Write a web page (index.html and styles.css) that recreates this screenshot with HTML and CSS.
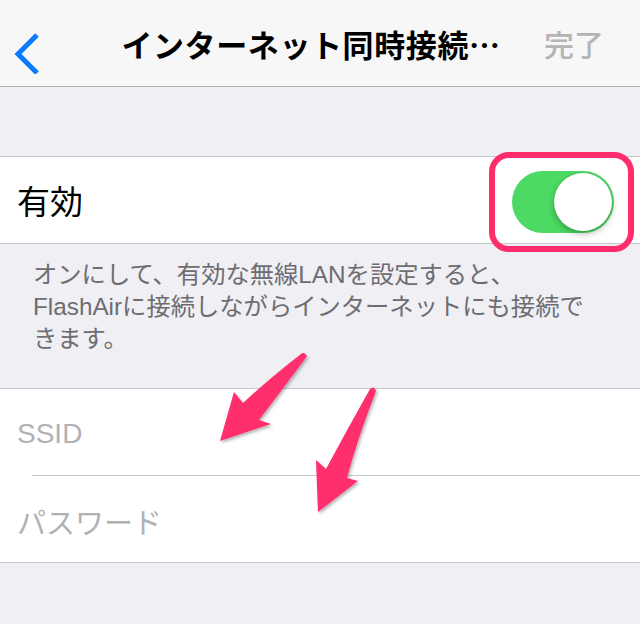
FILE: index.html
```html
<!DOCTYPE html>
<html lang="ja">
<head>
<meta charset="utf-8">
<title>インターネット同時接続</title>
<link rel="stylesheet" href="styles.css">
</head>
<body>
<div class="screen">
  <header class="navbar">
    <div class="nav-left">
      <svg class="back" width="40" height="60" viewBox="0 0 40 60">
        <polyline points="37,21 18,40 37,59" fill="none" stroke="#0a7aff" stroke-width="5" stroke-linecap="butt" stroke-linejoin="miter"/>
      </svg>
    </div>
    <div class="nav-title">インターネット同時接続…</div>
    <div class="nav-right">完了</div>
  </header>

  <section class="group group-first">
    <div class="cell">
      <span class="cell-label">有効</span>
      <div class="switch-wrap">
        <div class="switch"><div class="knob"></div></div>
        <div class="highlight"></div>
      </div>
    </div>
  </section>
  <p class="footer">オンにして、有効な無線LANを設定すると、<br>FlashAirに接続しながらインターネットにも接続で<br>きます。</p>

  <section class="group group-second">
    <div class="cell input-cell"><span class="placeholder">SSID</span></div>
    <div class="cell input-cell"><span class="placeholder placeholder-ja">パスワード</span></div>
  </section>

  <svg class="arrows" width="640" height="624" viewBox="0 0 640 624">
    <defs>
      <filter id="sh" x="-20%" y="-20%" width="140%" height="140%">
        <feDropShadow dx="1.5" dy="2" stdDeviation="1.5" flood-color="#000" flood-opacity="0.3"/>
      </filter>
    </defs>
    <path filter="url(#sh)" fill="#ff2d6c" d="M301,354 Q304,351 307,356 Q282,390 259,420 L271,424 L220,441 L234,392 L243,403 Q270,378 301,354 Z"/>
    <path filter="url(#sh)" fill="#ff2d6c" d="M370,389 Q374,385 376,391 Q357,440 347,478 L358,481 L318,512 L316,460 L326,469 Q348,428 370,389 Z"/>
  </svg>
</div>
</body>
</html>
```

FILE: styles.css
```css
html, body {
  margin: 0;
  padding: 0;
}

body {
  background: #efeff4;
  font-family: "Liberation Sans", "Noto Sans CJK JP", sans-serif;
  width: 640px;
  height: 624px;
  overflow: hidden;
}

.screen {
  position: relative;
  width: 640px;
  height: 624px;
  background: #efeff4;
}

.navbar {
  height: 86px;
  background: #f7f7f8;
  border-bottom: 1px solid #b2b2b2;
  display: grid;
  grid-template-columns: 100px 1fr 118px;
  align-items: center;
}

.nav-left {
  display: flex;
  align-items: center;
}

.back {
  display: block;
  margin-top: 2px;
}

.nav-title {
  text-align: center;
  font-family: "Noto Sans CJK JP", sans-serif;
  font-weight: 700;
  font-size: 31px;
  color: #000;
  white-space: nowrap;
  letter-spacing: 0.6px;
}

.nav-right {
  font-family: "Noto Sans CJK JP", sans-serif;
  font-size: 30px;
  font-weight: 500;
  color: #b4b4b4;
  padding-left: 22px;
}

.group {
  background: #fff;
  border-top: 1px solid #c8c7cc;
  border-bottom: 1px solid #c8c7cc;
}

.group-first {
  margin-top: 69px;
}

.cell {
  height: 86px;
  display: flex;
  align-items: center;
  padding-left: 17px;
}

.group-first .cell {
  justify-content: space-between;
  padding-right: 26px;
}

.cell-label {
  font-family: "Noto Sans CJK JP", sans-serif;
  font-size: 33px;
  color: #000;
}

.switch-wrap {
  position: relative;
}

.switch {
  width: 102px;
  height: 62px;
  border-radius: 31px;
  background: #4cd964;
  position: relative;
  margin-top: 3px;
}

.knob {
  position: absolute;
  right: 2px;
  top: 2px;
  width: 58px;
  height: 58px;
  border-radius: 50%;
  background: #fff;
  box-shadow: 0 3px 6px rgba(0, 0, 0, 0.28), 0 0 1px rgba(0, 0, 0, 0.2);
}

.highlight {
  position: absolute;
  left: -23px;
  top: -16px;
  width: 133px;
  height: 88px;
  border: 6px solid #ff2d6c;
  border-radius: 20px;
}

.footer {
  margin: 0;
  padding: 15px 10px 0 33px;
  font-size: 24.3px;
  line-height: 32px;
  color: #6d6d72;
  height: 128px;
  box-sizing: border-box;
  white-space: nowrap;
}

.group-second {
  margin-top: 16px;
}

.input-cell {
  height: 86px;
}

.input-cell + .input-cell {
  background-image: linear-gradient(#c8c7cc, #c8c7cc);
  background-size: calc(100% - 32px) 1px;
  background-position: 32px 0;
  background-repeat: no-repeat;
  height: 87px;
  padding-top: 1px;
  box-sizing: border-box;
}

.placeholder {
  font-size: 28px;
  color: #b1b1b5;
  margin-top: 4px;
}

.placeholder-ja {
  font-size: 29px;
}

.arrows {
  position: absolute;
  left: 0;
  top: 0;
  pointer-events: none;
}
```
